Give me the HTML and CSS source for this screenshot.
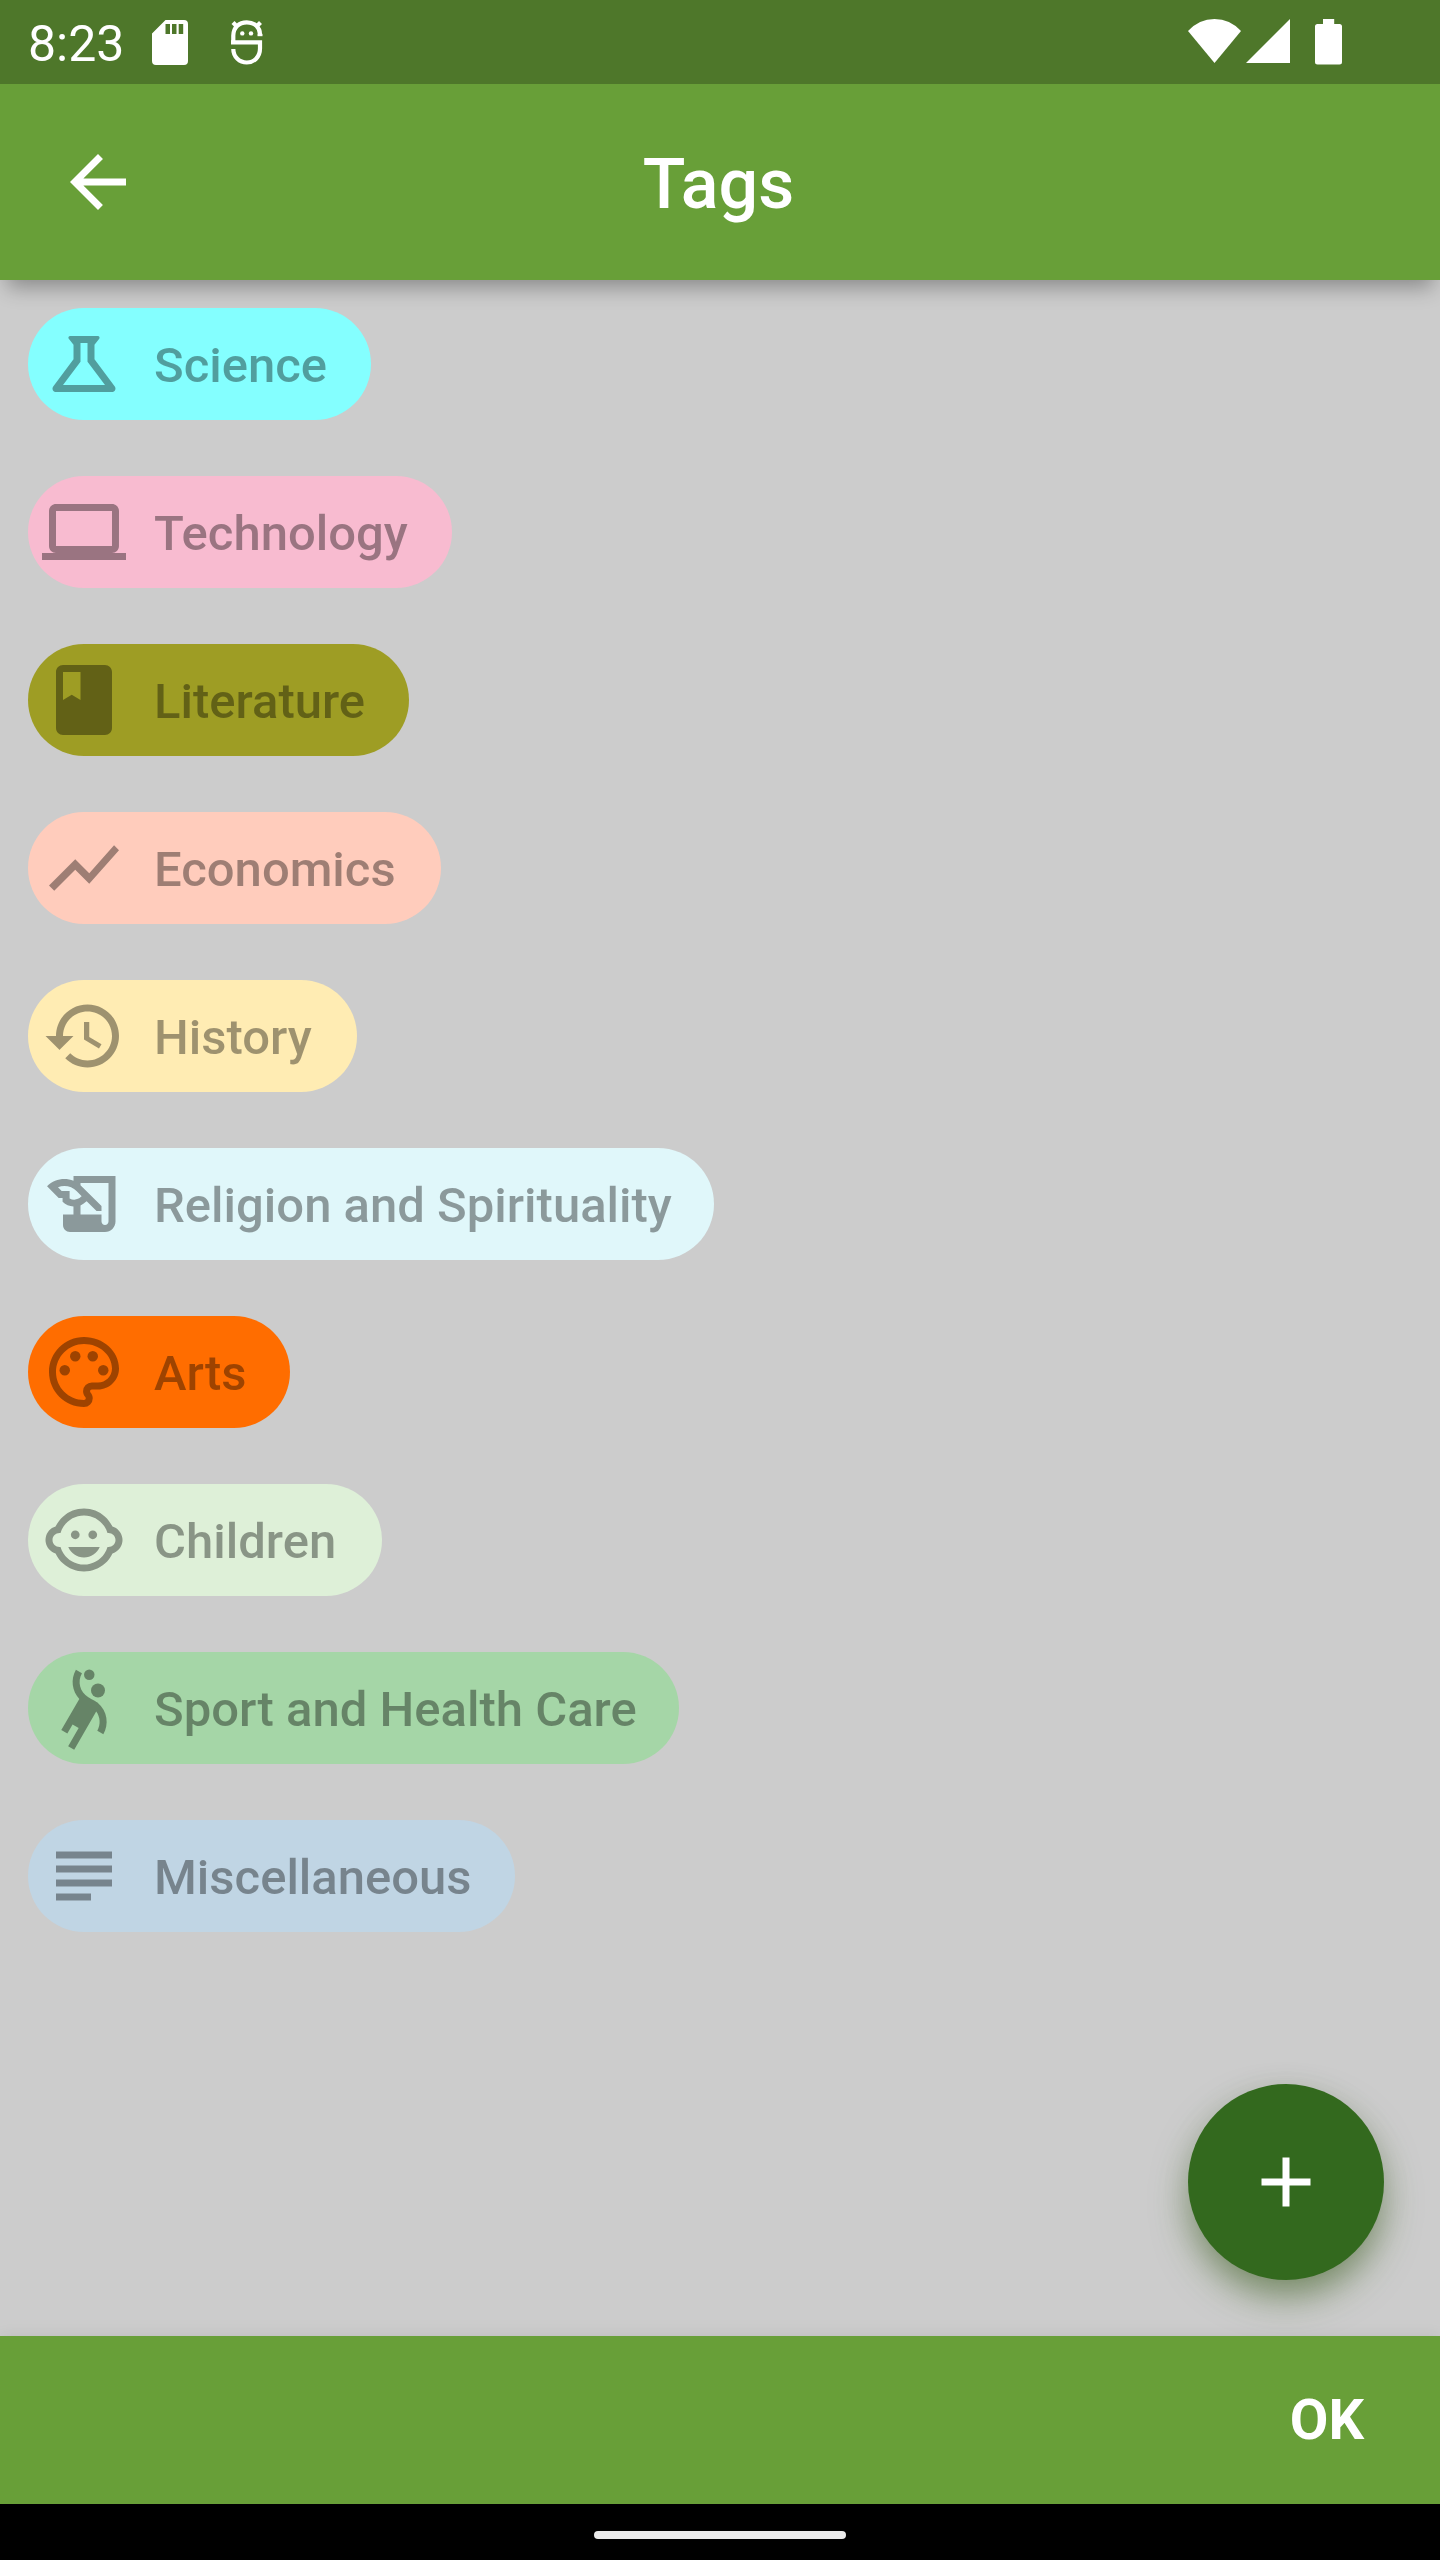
FILE: index.html
```html
<!DOCTYPE html>
<html lang="en">
<head>
<meta charset="utf-8">
<title>Tags</title>
<link rel="stylesheet" href="styles.css">
</head>
<body>
<div class="screen">
  <header class="top">
    <div class="status">
      <span class="clock">8:23</span>
      <svg class="sd" viewBox="0 0 36 45"><path fill-rule="evenodd" d="M13.500 0H32a4 4 0 0 1 4 4V41a4 4 0 0 1-4 4H4a4 4 0 0 1-4-4V13.500ZM13.500 4v10h4.500V4ZM20 4v10h4.500V4ZM26.700 4v10h4.500V4Z"/></svg>
      <svg class="bug" viewBox="0 0 32 45"><path fill="none" stroke="#fff" stroke-width="4.200" d="M2.300 22.300V15.500C2.300 7.500 8 2.300 15.800 2.300S29 7.500 29 14.200M0 22.300H29V28.500C29 37 23 42.500 15.800 42.500S2.300 37 2.300 29M2 2.500l5 5M29.500 2.500l-5 5"/><path d="M26.500 13.800h5v2.400h-5z"/><circle cx="11.300" cy="13.400" r="2.200"/><circle cx="20" cy="13.400" r="2.200"/></svg>
      <svg class="wifi" viewBox="0 0 53 44"><path d="M0 12Q11 0 26.500 0T53 12L26.500 44Z"/></svg>
      <svg class="signal" viewBox="0 0 44 44"><path d="M44 0V44H0Z"/></svg>
      <svg class="battery" viewBox="0 0 27 46"><path d="M8 0H19.200V5H24.500A2.500 2.500 0 0 1 27 7.500V43a2.500 2.500 0 0 1-2.500 2.500h-22A2.500 2.500 0 0 1 0 43V7.500A2.500 2.500 0 0 1 2.500 5H8Z"/></svg>
    </div>
    <div class="appbar">
      <svg class="icon back" viewBox="0 0 24 24"><path d="M20 11H7.830l5.590-5.590L12 4l-8 8 8 8 1.410-1.410L7.830 13H20v-2z"/></svg>
      <h1 class="title">Tags</h1>
    </div>
  </header>
  <main class="tags">
    <div class="chip science"><svg class="icon" viewBox="0 0 24 24"><path fill-rule="evenodd" d="M13 11.330L18 18H6l5-6.670V6h2ZM15.960 4H8.040C7.620 4 7.390 4.480 7.650 4.810L9 6.500v4.170L3.200 18.400C2.710 19.060 3.180 20 4 20h16c.82 0 1.290-.94.800-1.600L15 10.670V6.500l1.350-1.690C16.610 4.480 16.380 4 15.960 4Z"/></svg><span>Science</span></div>
    <div class="chip technology"><svg class="icon" viewBox="0 0 24 24"><path d="M20 18c1.100 0 1.990-.9 1.990-2L22 6c0-1.100-.9-2-2-2H4c-1.100 0-2 .9-2 2v10c0 1.100.9 2 2 2H0v2h24v-2h-4zM4 6h16v10H4V6z"/></svg><span>Technology</span></div>
    <div class="chip literature"><svg class="icon" viewBox="0 0 24 24"><path d="M18 2H6c-1.100 0-2 .9-2 2v16c0 1.100.9 2 2 2h12c1.100 0 2-.9 2-2V4c0-1.100-.9-2-2-2zM6 4h5v8l-2.500-1.500L6 12V4z"/></svg><span>Literature</span></div>
    <div class="chip economics"><svg class="icon" viewBox="0 0 24 24"><path d="M3.500 18.490l6-6.010 4 4L22 6.920l-1.410-1.410-7.090 7.970-4-4L2 16.990z"/></svg><span>Economics</span></div>
    <div class="chip history"><svg class="icon" viewBox="0 0 24 24"><path d="M13 3c-4.970 0-9 4.030-9 9H1l3.890 3.890.07.14L9 12H6c0-3.870 3.130-7 7-7s7 3.130 7 7-3.130 7-7 7c-1.930 0-3.680-.79-4.940-2.060l-1.420 1.420C8.270 19.990 10.510 21 13 21c4.970 0 9-4.030 9-9s-4.030-9-9-9zm-1 5v5l4.280 2.540.72-1.210-3.500-2.080V8H12z"/></svg><span>History</span></div>
    <div class="chip religion"><svg class="icon" viewBox="0 0 24 24"><path d="M9,4v1.380c-0.830-0.330-1.720-0.500-2.610-0.500c-1.790,0-3.580,0.680-4.950,2.050l3.330,3.330h1.110v1.110c0.860,0.860,1.980,1.310,3.110,1.360V15H6v3c0,1.100,0.900,2,2,2h10c1.660,0,3-1.340,3-3V4H9z M7.890,10.410V8.260H5.610L4.570,7.220C5.140,7,5.760,6.880,6.390,6.880c1.340,0,2.590,0.520,3.540,1.460l1.410,1.410l-0.200,0.200c-0.510,0.510-1.190,0.800-1.920,0.800C8.750,10.750,8.290,10.630,7.890,10.410z M19,17c0,0.550-0.450,1-1,1s-1-0.450-1-1v-2h-6v-2.590c0.570-0.230,1.100-0.570,1.560-1.030l0.200-0.200L15.590,14H17v-1.410l-6-5.970V6h8V17z"/></svg><span>Religion and Spirituality</span></div>
    <div class="chip arts"><svg class="icon" viewBox="0 0 24 24"><path d="M12 22C6.490 22 2 17.510 2 12S6.490 2 12 2s10 4.040 10 9c0 3.310-2.690 6-6 6h-1.770c-.28 0-.5.22-.5.5 0 .12.05.23.13.33.41.47.64 1.060.64 1.670A2.500 2.500 0 0 1 12 22zm0-18c-4.410 0-8 3.590-8 8s3.590 8 8 8c.28 0 .5-.22.5-.5a.54.54 0 0 0-.14-.35c-.41-.46-.63-1.050-.63-1.650a2.500 2.500 0 0 1 2.500-2.500H16c2.210 0 4-1.790 4-4 0-3.860-3.590-7-8-7z"/><circle cx="6.500" cy="11.500" r="1.500"/><circle cx="9.500" cy="7.500" r="1.500"/><circle cx="14.500" cy="7.500" r="1.500"/><circle cx="17.500" cy="11.500" r="1.500"/></svg><span>Arts</span></div>
    <div class="chip children"><svg class="icon" viewBox="0 0 24 24"><circle cx="14.500" cy="10.500" r="1.250"/><circle cx="9.500" cy="10.500" r="1.250"/><path d="M22.940 12.660c.04-.21.06-.43.06-.66s-.02-.45-.06-.66c-.25-1.510-1.360-2.740-2.810-3.170-.53-1.120-1.280-2.100-2.190-2.910C16.360 3.850 14.280 3 12 3s-4.360.85-5.940 2.260c-.92.81-1.670 1.800-2.190 2.910-1.450.43-2.560 1.650-2.810 3.170-.04.21-.06.43-.06.66s.02.45.06.66c.25 1.510 1.360 2.740 2.810 3.170.52 1.110 1.270 2.090 2.170 2.890C7.620 20.140 9.710 21 12 21s4.380-.86 5.970-2.280c.9-.8 1.650-1.790 2.170-2.890 1.440-.43 2.550-1.650 2.800-3.170zM19 14c-.1 0-.19-.02-.29-.03-.2.67-.49 1.290-.86 1.860C16.600 17.740 14.450 19 12 19s-4.600-1.260-5.850-3.170c-.37-.57-.66-1.190-.86-1.860-.1.010-.19.030-.29.030-1.100 0-2-.9-2-2s.9-2 2-2c.1 0 .19.020.29.030.2-.67.49-1.290.86-1.860C7.400 6.260 9.550 5 12 5s4.600 1.260 5.850 3.170c.37.57.66 1.190.86 1.860.1-.01.19-.03.29-.03 1.100 0 2 .9 2 2s-.9 2-2 2zM7.500 14c.76 1.770 2.490 3 4.500 3s3.740-1.230 4.500-3h-9z"/></svg><span>Children</span></div>
    <div class="chip sport"><svg class="icon" viewBox="0 0 24 24"><circle cx="16" cy="7" r="2"/><circle cx="13.500" cy="2.500" r="1.500"/><path d="M15.840,10.410c0,0-1.630-0.940-2.600-1.500c-2.380-1.380-3.200-4.440-1.820-6.820l-1.730-1C8.100,3.830,8.600,7.210,10.660,9.400l-5.150,8.920l1.730,1l1.500-2.600l1.730,1l-3,5.200l1.730,1l6.290-10.890c1.140,1.550,1.330,3.690,0.310,5.460l1.730,1C19.130,16.740,18.810,12.910,15.840,10.410z"/></svg><span>Sport and Health Care</span></div>
    <div class="chip misc"><svg class="icon" viewBox="0 0 24 24"><path d="M4 5h16v2H4zM4 9h16v2H4zM4 13h16v2H4zM4 17h10v2H4z"/></svg><span>Miscellaneous</span></div>
    <button class="fab" aria-label="Add tag"><svg class="icon" viewBox="0 0 24 24"><path d="M19 13h-6v6h-2v-6H5v-2h6V5h2v6h6v2z"/></svg></button>
  </main>
  <footer class="actions"><button class="ok">OK</button></footer>
  <nav class="gesture"><span class="pill"></span></nav>
</div>
</body>
</html>
```
FILE: styles.css
```css
* { box-sizing: border-box; }
body { margin: 0; font-family: Roboto, "Liberation Sans", sans-serif; }
button { border: 0; padding: 0; font-family: inherit; }
svg { display: block; flex: none; fill: currentColor; }

.screen {
  display: flex;
  flex-direction: column;
  width: 1440px;
  height: 2560px;
  overflow: hidden;
  background: #ccc;
}

.top {
  position: relative;
  z-index: 1;
  color: #fff;
  background: #689f38;
  box-shadow: 0 14px 20px -7px rgba(0, 0, 0, .33);
}
.status {
  display: flex;
  align-items: flex-start;
  height: 84px;
  padding: 0 98px 0 28px;
  background: #4e772a;
}
.clock { width: 123.5px; font-size: 50px; line-height: 58px; margin-top: 15px; white-space: nowrap; }
.sd { width: 36px; height: 45px; margin-top: 20px; }
.bug { width: 32px; height: 45px; margin: 20px 0 0 43px; }
.wifi { width: 53px; height: 44px; margin: 19px 0 0 auto; }
.signal { width: 44px; height: 44px; margin: 19px 0 0 5px; }
.battery { width: 27px; height: 46px; margin: 19px 0 0 25px; }

.appbar {
  display: grid;
  grid-template-columns: 84px 1fr 84px;
  align-items: center;
  height: 196px;
  padding: 0 56px;
}
.icon { width: 84px; height: 84px; }
.title { margin: 0; padding: 4px 3px 0 0; text-align: center; font-size: 70px; font-weight: 500; line-height: 82px; }

.tags {
  position: relative;
  flex: 1;
  display: flex;
  flex-direction: column;
  align-items: flex-start;
  gap: 56px;
  padding: 28px;
}
.chip {
  display: flex;
  align-items: center;
  gap: 28px;
  height: 112px;
  padding-left: 14px;
  border-radius: 56px;
  color: rgba(0, 0, 0, .38);
  font-size: 49px;
  font-weight: 500;
  line-height: 58px;
  white-space: nowrap;
}
.chip span { padding-top: 4px; }
.science { width: 343px; background: #84ffff; }
.technology { width: 424px; background: #f8bbd0; }
.literature { width: 381px; background: #9e9d24; }
.economics { width: 413px; background: #ffccbc; }
.history { width: 329px; background: #ffecb3; }
.religion { width: 686px; background: #e0f7fa; }
.arts { width: 262px; background: #ff6d00; }
.children { width: 354px; background: #def0d8; }
.sport { width: 651px; background: #a5d6a7; }
.misc { width: 487px; background: #c0d5e4; }

.fab {
  position: absolute;
  right: 56px;
  bottom: 56px;
  display: flex;
  align-items: center;
  justify-content: center;
  width: 196px;
  height: 196px;
  border-radius: 50%;
  color: #fff;
  background: #33691e;
  box-shadow: 0 19px 38px -4px rgba(51, 90, 20, .58), 0 3.5px 35px rgba(0, 0, 0, .05);
}

.actions {
  position: relative;
  display: flex;
  align-items: center;
  justify-content: flex-end;
  height: 168px;
  padding-right: 76px;
  background: #689f38;
  box-shadow: 0 0 14px rgba(0, 0, 0, .08);
}
.ok { color: #fff; background: none; font-size: 56px; font-weight: 700; line-height: 66px; }

.gesture {
  position: relative;
  display: flex;
  justify-content: center;
  height: 56px;
  padding-top: 27px;
  background: #000;
}
.pill { width: 252px; height: 8px; border-radius: 4px; background: #ebebeb; }
```
